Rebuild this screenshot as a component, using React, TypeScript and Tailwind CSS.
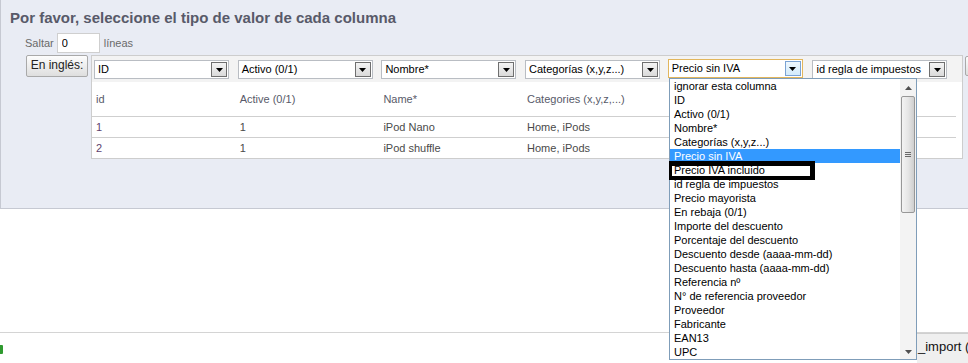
import React from "react";

const columns = [
  { select: "ID", head: "id", r1: "1", r2: "2" },
  { select: "Activo (0/1)", head: "Active (0/1)", r1: "1", r2: "1" },
  { select: "Nombre*", head: "Name*", r1: "iPod Nano", r2: "iPod shuffle" },
  { select: "Categorías (x,y,z...)", head: "Categories (x,y,z,...)", r1: "Home, iPods", r2: "Home, iPods" },
  { select: "Precio sin IVA", head: "", r1: "", r2: "", focused: true },
  { select: "id regla de impuestos", head: "", r1: "", r2: "" },
];

const options = [
  "ignorar esta columna",
  "ID",
  "Activo (0/1)",
  "Nombre*",
  "Categorías (x,y,z...)",
  "Precio sin IVA",
  "Precio IVA incluido",
  "id regla de impuestos",
  "Precio mayorista",
  "En rebaja (0/1)",
  "Importe del descuento",
  "Porcentaje del descuento",
  "Descuento desde (aaaa-mm-dd)",
  "Descuento hasta (aaaa-mm-dd)",
  "Referencia nº",
  "N° de referencia proveedor",
  "Proveedor",
  "Fabricante",
  "EAN13",
  "UPC",
];

function Arrow({ color = "#000" }: { color?: string }) {
  return (
    <svg width="7" height="4" viewBox="0 0 7 4" className="mt-[1px]">
      <polygon points="0,0 7,0 3.5,4" fill={color} />
    </svg>
  );
}

function Select({ label, focused }: { label: string; focused?: boolean }) {
  return (
    <div
      className={`flex h-[19px] w-[135px] items-center bg-white border ${
        focused ? "border-[#e2b65c] -mt-[1px] -ml-[1px]" : "border-[#b9bdc3]"
      }`}
    >
      <span className="flex-1 truncate pl-[3px] text-[11px] leading-none text-black">{label}</span>
      <span
        className={`mr-[1px] flex h-[15px] w-[16px] items-center justify-center border ${
          focused
            ? "border-[#7ba3d4] bg-gradient-to-b from-[#eef7fd] to-[#d3ebfb]"
            : "border-[#6f6f6f] bg-gradient-to-b from-[#f4f4f4] to-[#dadada]"
        }`}
      >
        <Arrow />
      </span>
    </div>
  );
}

function DropdownList() {
  return (
    <div className="absolute left-[669px] top-[78px] flex h-[282px] w-[248px] border border-[#7f9db9] bg-white">
      <div className="flex-1">
        {options.map((o, i) => (
          <div
            key={o}
            className={`h-[14px] pl-[4px] text-[11px] leading-[14px] ${
              i === 5 ? "bg-[#3399ff] text-white" : "text-black"
            }`}
          >
            {o}
          </div>
        ))}
      </div>
      <div className="flex w-[16px] flex-col bg-[#f3f3f3]">
        <div className="flex h-[17px] items-center justify-center">
          <svg width="7" height="4" viewBox="0 0 7 4">
            <polygon points="0,4 7,4 3.5,0" fill="#505050" />
          </svg>
        </div>
        <div className="mx-[1px] flex h-[117px] items-center justify-center rounded-[2px] border border-[#979797] bg-gradient-to-r from-[#f3f3f3] via-[#e6e6e6] to-[#cfcfcf]">
          <div className="flex flex-col gap-[1px]">
            <div className="h-[1px] w-[6px] bg-[#6a6a6a]" />
            <div className="h-[1px] w-[6px] bg-[#6a6a6a]" />
            <div className="h-[1px] w-[6px] bg-[#6a6a6a]" />
          </div>
        </div>
        <div className="flex-1" />
        <div className="flex h-[16px] items-center justify-center">
          <Arrow color="#505050" />
        </div>
      </div>
    </div>
  );
}

export default function App() {
  return (
    <div className="relative h-[363px] w-[968px] overflow-hidden bg-white font-['Liberation_Sans',Arial,sans-serif]">
      <div className="h-[209px] border-b border-l border-[#c6c9d2] bg-[#e9ecf4] pt-[9px]">
        <h1 className="pl-[9px] text-[15px] font-bold leading-[18px] text-[#585a69]">
          Por favor, seleccione el tipo de valor de cada columna
        </h1>
        <div className="mt-[6px] flex h-[20px] items-center pl-[24px] text-[11px] text-[#6a6a6a]">
          <span>Saltar</span>
          <input
            readOnly
            value="0"
            className="ml-[3px] h-[20px] w-[43px] border border-[#cfcfcf] bg-white pl-[4px] text-[11px] text-black outline-none"
          />
          <span className="ml-[4px]">líneas</span>
        </div>
        <div className="mt-[2px] flex items-start pl-[25px]">
          <button className="h-[22px] w-[62px] shrink-0 whitespace-nowrap rounded-[2px] border border-[#a9a9a9] bg-gradient-to-b from-[#fdfdfd] to-[#dedede] pb-[3px] text-[12px] text-[#222]">
            En inglés:
          </button>
          <div className="ml-[3px] w-[872px] shrink-0 border border-[#cdcdcd] bg-white">
            <div className="grid h-[26px] grid-cols-[repeat(6,143.7px)] bg-[#f3f3f3] pl-[2px] pt-[4px]">
              {columns.map((c) => (
                <Select key={c.select} label={c.select} focused={c.focused} />
              ))}
            </div>
            <div className="w-[864px] text-[11px]">
              <div className="grid h-[34px] grid-cols-[repeat(6,143.7px)] items-center pl-[4px] text-[#585a69]">
                {columns.map((c, i) => (
                  <span key={i}>{c.head}</span>
                ))}
              </div>
              <div className="grid h-[21px] grid-cols-[repeat(6,143.7px)] items-center border-t border-[#cfcfcf] pl-[4px] text-[#4a4a4a]">
                {columns.map((c, i) => (
                  <span key={i} className={i === 0 ? "text-[#5e3f6e]" : ""}>
                    {c.r1}
                  </span>
                ))}
              </div>
              <div className="grid h-[21px] grid-cols-[repeat(6,143.7px)] items-center border-t border-[#cfcfcf] pl-[4px] text-[#4a4a4a]">
                {columns.map((c, i) => (
                  <span key={i} className={i === 0 ? "text-[#5e3f6e]" : ""}>
                    {c.r2}
                  </span>
                ))}
              </div>
            </div>
          </div>
          <div className="ml-[2px] mt-[1px] h-[20px] w-[20px] shrink-0 rounded-[2px] border border-[#a9a9a9] bg-gradient-to-b from-[#fdfdfd] to-[#dedede]" />
        </div>
      </div>

      <div className="h-[123px]" />

      <div className="flex h-[31px] border-t border-[#d4d4d4]">
        <div className="flex flex-1 items-start bg-white pt-[12px]">
          <div className="h-[9px] w-[3px] rounded-r-[1px] bg-[#2f9a2f]" />
        </div>
        <div className="w-[51px] overflow-hidden border-t border-[#cfcfcf] bg-[#efefef] pl-[1px] pt-[6px] text-[13px] leading-none whitespace-nowrap text-[#111]">
          _import (1
        </div>
      </div>

      <DropdownList />
      <div className="pointer-events-none absolute left-[669px] top-[161px] h-[19px] w-[146px] border-b-[4px] border-l-[3px] border-r-[5px] border-t-[5px] border-black" />
    </div>
  );
}
